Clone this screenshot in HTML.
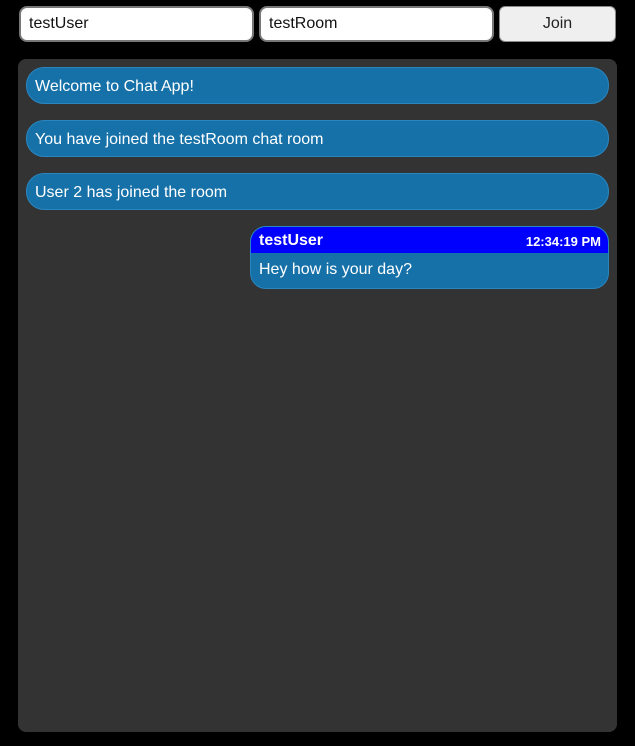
<!DOCTYPE html>
<html><head><style>
body{margin:0;background:#000;width:635px;height:746px;overflow:hidden;font-family:"Liberation Sans",Arial,sans-serif;position:relative}
.in{position:absolute;top:6px;height:36px;box-sizing:border-box;background:#fff;border:2px solid #777;border-radius:8px;font-size:16px;color:#111;padding:7px 8px;line-height:18px}
.btn{position:absolute;left:499px;top:6px;width:117px;height:36px;box-sizing:border-box;background:#efefef;border:1px solid #888;border-radius:6px;font-size:16px;text-align:center;line-height:34px;color:#222}
.panel{position:absolute;left:18px;top:59px;width:599px;height:673px;background:#333;border-radius:8px}
.m{position:absolute;left:8px;width:583px;height:37px;box-sizing:border-box;background:#1671a8;border:1px solid #2a86c0;border-radius:18px;color:#fff;font-size:16px;padding:0 8px;line-height:37px}
.u{position:absolute;left:232px;top:167px;width:359px;height:63px;box-sizing:border-box;background:#1671a8;border:1px solid #2a86c0;border-radius:16px;overflow:hidden;color:#fff}
.h{background:#00f;height:26px;padding:0 7px 0 8px;display:flex;justify-content:space-between;align-items:center}
.h b{font-size:16px;position:relative;top:1px}.h span{font-size:13px;font-weight:bold;position:relative;top:1px}
.t{font-size:16px;padding:8px 8px}
</style></head><body>
<div class="in" style="left:19px;width:235px">testUser</div>
<div class="in" style="left:259px;width:235px">testRoom</div>
<div class="btn">Join</div>
<div class="panel">
<div class="m" style="top:8px">Welcome to Chat App!</div>
<div class="m" style="top:61px">You have joined the testRoom chat room</div>
<div class="m" style="top:114px">User 2 has joined the room</div>
<div class="u"><div class="h"><b>testUser</b><span>12:34:19 PM</span></div><div class="t">Hey how is your day?</div></div>
</div>
</body></html>
